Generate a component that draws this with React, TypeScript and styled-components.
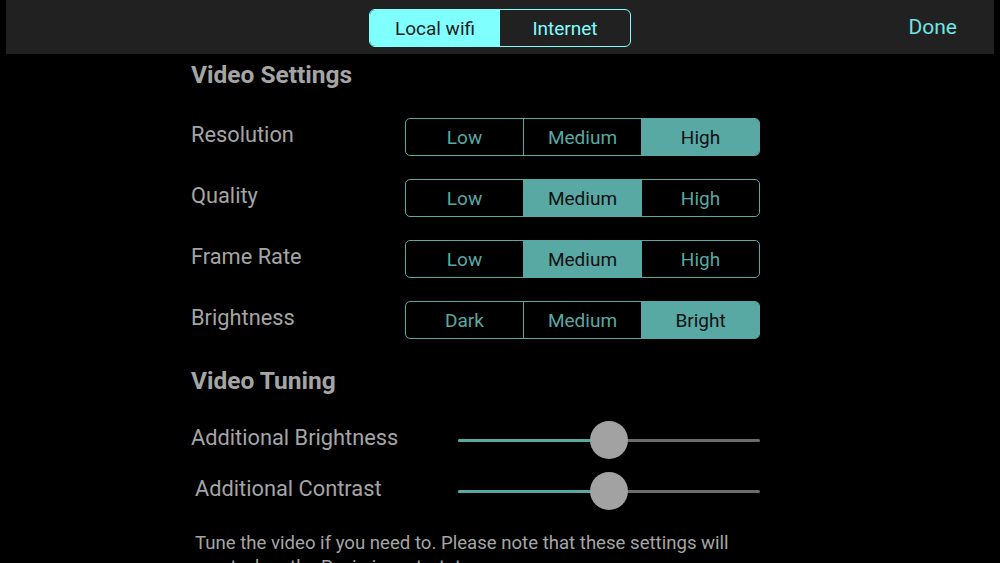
import styled, { createGlobalStyle } from "styled-components";

const GlobalStyle = createGlobalStyle`
  html, body {
    margin: 0;
    padding: 0;
    background: #000;
  }
  body {
    font-family: Roboto, "Liberation Sans", sans-serif;
  }
`;

const TEAL = "#58a8a4";
const CYAN = "#80ffff";
const LABEL = "#a5a5a5";

const Screen = styled.div`
  width: 1000px;
  height: 563px;
  overflow: hidden;
  background: #000;
`;

const TopBar = styled.div`
  margin: 0 6px;
  height: 54px;
  background: #212121;
  display: grid;
  grid-template-columns: 1fr auto 1fr;
  align-items: center;
`;

const ModeSwitch = styled.div`
  grid-column: 2;
  display: flex;
  width: 262px;
  height: 38px;
  margin-top: 2px;
  border: 1.5px solid ${CYAN};
  border-radius: 6px;
  overflow: hidden;
  box-sizing: border-box;
`;

const ModeOption = styled.div<{ $active?: boolean }>`
  flex: 1;
  display: flex;
  align-items: center;
  justify-content: center;
  font-size: 19px;
  background: ${({ $active }) => ($active ? CYAN : "transparent")};
  color: ${({ $active }) => ($active ? "#1c1c1c" : CYAN)};
`;

const DoneButton = styled.div`
  grid-column: 3;
  justify-self: end;
  margin-right: 37px;
  font-size: 21px;
  color: #6fe6e6;
`;

const Content = styled.div`
  padding-left: 191px;
  width: 569px;
  display: flex;
  flex-direction: column;
`;

const Heading = styled.div<{ $top: number }>`
  margin-top: ${({ $top }) => $top}px;
  height: 30px;
  line-height: 30px;
  font-size: 24.5px;
  font-weight: bold;
  color: ${LABEL};
`;

const Rows = styled.div`
  margin-top: 28px;
  display: flex;
  flex-direction: column;
  gap: 23px;
`;

const Row = styled.div`
  display: flex;
  align-items: center;
  height: 38px;
`;

const Label = styled.div<{ $width: number; $indent?: number }>`
  width: ${({ $width }) => $width}px;
  padding-left: ${({ $indent }) => $indent ?? 0}px;
  box-sizing: border-box;
  margin-top: -5px;
  font-size: 21.8px;
  color: ${LABEL};
`;

const Segments = styled.div`
  flex: 1;
  display: flex;
  height: 38px;
  border: 1.5px solid ${TEAL};
  border-radius: 5px;
  overflow: hidden;
  box-sizing: border-box;
`;

const Segment = styled.div<{ $active?: boolean }>`
  flex: 1;
  display: flex;
  align-items: center;
  justify-content: center;
  font-size: 19px;
  background: ${({ $active }) => ($active ? TEAL : "transparent")};
  color: ${({ $active }) => ($active ? "#111" : TEAL)};
  & + & {
    border-left: 1.5px solid ${TEAL};
  }
`;

const SliderRows = styled.div`
  margin-top: 24px;
  display: flex;
  flex-direction: column;
  gap: 11px;
`;

const SliderRow = styled.div`
  display: flex;
  align-items: center;
  height: 40px;
`;

const Track = styled.div`
  position: relative;
  flex: 1;
  height: 3px;
  background: #6c6c6c;
  border-radius: 2px;
`;

const Fill = styled.div`
  height: 100%;
  background: ${TEAL};
  border-radius: 2px;
`;

const Thumb = styled.div`
  position: absolute;
  top: 50%;
  width: 38px;
  height: 38px;
  border-radius: 50%;
  background: #a2a2a2;
  transform: translate(-50%, -50%);
`;

const Note = styled.div`
  margin-top: 20px;
  padding-left: 4px;
  width: 550px;
  font-size: 18.6px;
  line-height: 24px;
  color: ${LABEL};
`;

const settings = [
  { label: "Resolution", options: ["Low", "Medium", "High"], active: 2 },
  { label: "Quality", options: ["Low", "Medium", "High"], active: 1 },
  { label: "Frame Rate", options: ["Low", "Medium", "High"], active: 1 },
  { label: "Brightness", options: ["Dark", "Medium", "Bright"], active: 2 },
];

const sliders = [
  { label: "Additional Brightness", value: 0.5, indent: 0 },
  { label: "Additional Contrast", value: 0.5, indent: 4 },
];

export default function App() {
  return (
    <Screen>
      <GlobalStyle />
      <TopBar>
        <ModeSwitch>
          <ModeOption $active>Local wifi</ModeOption>
          <ModeOption>Internet</ModeOption>
        </ModeSwitch>
        <DoneButton>Done</DoneButton>
      </TopBar>
      <Content>
        <Heading $top={6}>Video Settings</Heading>
        <Rows>
          {settings.map((s) => (
            <Row key={s.label}>
              <Label $width={214}>{s.label}</Label>
              <Segments>
                {s.options.map((o, i) => (
                  <Segment key={o} $active={i === s.active}>
                    {o}
                  </Segment>
                ))}
              </Segments>
            </Row>
          ))}
        </Rows>
        <Heading $top={27}>Video Tuning</Heading>
        <SliderRows>
          {sliders.map((s) => (
            <SliderRow key={s.label}>
              <Label $width={267} $indent={s.indent}>
                {s.label}
              </Label>
              <Track>
                <Fill style={{ width: `${s.value * 100}%` }} />
                <Thumb style={{ left: `${s.value * 100}%` }} />
              </Track>
            </SliderRow>
          ))}
        </SliderRows>
        <Note>
          Tune the video if you need to. Please note that these settings will
          reset when the Povio is restartet.
        </Note>
      </Content>
    </Screen>
  );
}
